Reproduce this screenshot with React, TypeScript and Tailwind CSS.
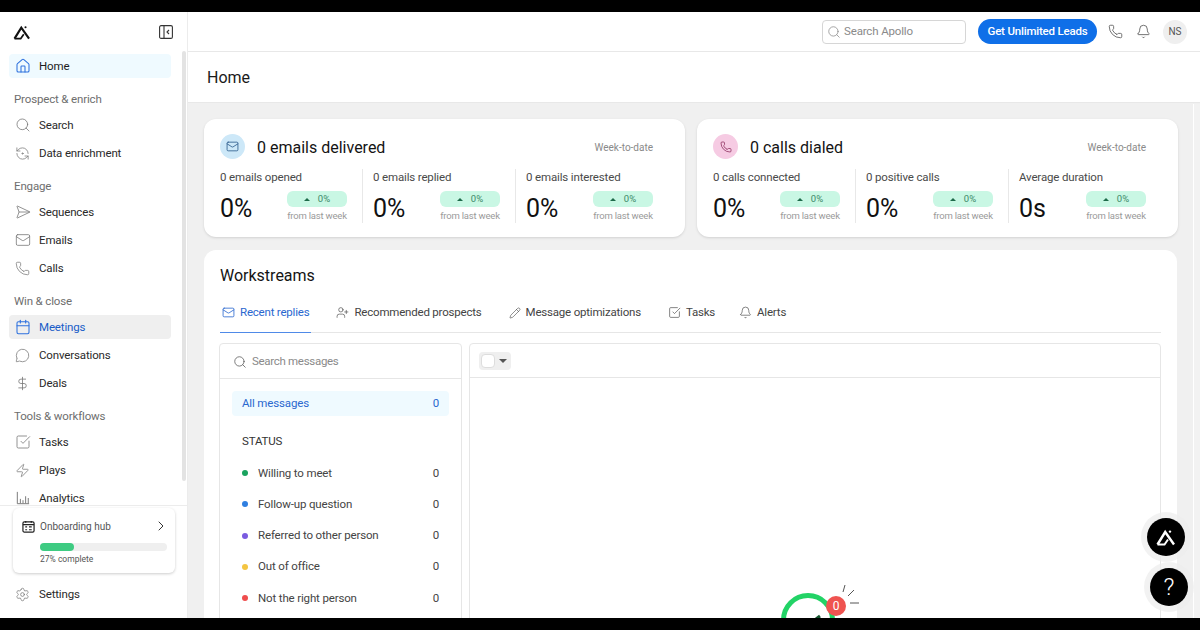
import { House, Search, RefreshCcwDot, SendHorizontal, Mail, Phone, Calendar, MessageCircle, DollarSign, SquareCheckBig, Zap, Settings, ChevronRight, Bell, UserPlus, Pencil } from "lucide-react";
import type { ReactNode } from "react";

const font = "[font-family:'Roboto',sans-serif]";

function Logo({ className }: { className?: string }) {
  return (
    <svg viewBox="0 0 20 17" className={className} fill="none" stroke="currentColor">
      <path d="M1.5 15.5 L9.2 3 L18 15.5" strokeWidth="2.4" />
      <path d="M1.5 15.5 H8.5 L12 10.5" strokeWidth="2" />
      <circle cx="14" cy="2.6" r="1.2" fill="currentColor" stroke="none" />
    </svg>
  );
}

function Bars({ className }: { className?: string }) {
  return (
    <svg viewBox="0 0 16 16" className={className} fill="none" stroke="currentColor" strokeWidth="1.1">
      <path d="M1.5 1v13.5H15M5 14V9M8 14V10.5M11 14V6M14 14V8" />
    </svg>
  );
}

function NavRow({ icon, label, state }: { icon: ReactNode; label: string; state?: "home" | "active" }) {
  return (
    <div className="h-7 flex items-center">
      <div
        className={
          "h-6 w-[162px] ml-[9px] rounded flex items-center pl-[5px] gap-[8px] text-[11.5px] tracking-[-0.15px] " +
          (state === "home"
            ? "bg-[#effaff] text-[#1c1c1c]"
            : state === "active"
            ? "bg-[#efefef] text-[#1a5dc8]"
            : "text-[#2a2a2a]")
        }
      >
        <span className={"w-[17px] flex justify-center " + (state ? "text-[#2f72de]" : "text-[#777]")}>{icon}</span>
        <span className="mt-px">{label}</span>
      </div>
    </div>
  );
}

function SideLabel({ text }: { text: string }) {
  return <div className="h-6 mt-[7px] ml-[14px] pt-px flex items-center text-[11.5px] tracking-[-0.15px] text-[#6e6e6e]">{text}</div>;
}

function Stat({ label, value, last }: { label: string; value: string; last?: boolean }) {
  return (
    <div className={"w-[143px] mr-[10px] h-[54px] " + (last ? "" : "border-r border-[#e8e8e8]")}>
      <div className="text-[11.5px] tracking-[-0.15px] leading-4 text-[#4a4a4a]">{label}</div>
      <div className="flex justify-between w-[127px] mt-[6px]">
        <div className="text-[25px] leading-8 mt-[2px] text-[#111]">{value}</div>
        <div className="w-[60px] flex flex-col items-center">
          <div className="w-[60px] h-4 rounded-md bg-[#c9f7e4] flex items-center justify-center gap-[8px] text-[9.5px] text-[#3d8a68]">
            <span className="w-0 h-0 border-x-[3px] border-x-transparent border-b-[3px] border-b-[#1f6b4a]" />
            0%
          </div>
          <div className="text-[9.5px] tracking-[-0.2px] leading-4 mt-px text-[#9a9a9a] whitespace-nowrap">from last week</div>
        </div>
      </div>
    </div>
  );
}

function StatCard({ icon, tint, title, stats }: { icon: ReactNode; tint: string; title: string; stats: [string, string][] }) {
  return (
    <div className="w-[481px] h-[118px] bg-white rounded-xl shadow-sm pl-[16px] pt-[15px]">
      <div className="flex items-center h-[25px] pr-[32px]">
        <span className={"w-[25px] h-[25px] rounded-full flex items-center justify-center " + tint}>{icon}</span>
        <span className="ml-[12px] mt-[2px] text-base text-[#141414]">{title}</span>
        <span className="ml-auto mt-px text-[10px] text-[#8a8a8a]">Week-to-date</span>
      </div>
      <div className="flex mt-[10px]">
        {stats.map((s, i) => (
          <Stat key={s[0]} label={s[0]} value={s[1]} last={i === 2} />
        ))}
      </div>
    </div>
  );
}

function Tab({ icon, label, active, nudge }: { icon: ReactNode; label: string; active?: boolean; nudge?: boolean }) {
  return (
    <div className={"h-10 flex items-center gap-[5px] px-[2px] text-[11.5px] tracking-[-0.2px] -mb-px border-b " + (nudge ? "-ml-[3px] " : "") + (active ? "border-[#4f8ae8] text-[#2a68cf]" : "border-transparent text-[#444]")}>
      {icon}
      <span className="mt-px">{label}</span>
    </div>
  );
}

function StatusRow({ dot, label }: { dot: string; label: string }) {
  return (
    <div className="h-[31.25px] flex items-center pl-[22px] pr-[22px] text-[11.5px] tracking-[-0.15px] text-[#444]">
      <span className={"w-[6px] h-[6px] rounded-full mr-[10px] " + dot} />
      {label}
      <span className="ml-auto">0</span>
    </div>
  );
}

export default function App() {
  return (
    <div className={"w-[1200px] h-[630px] overflow-hidden relative bg-black flex flex-col " + font}>
      <div className="h-3 shrink-0" />
      <div className="h-[606px] flex bg-white">
        <aside className="w-[188px] shrink-0 border-r border-[#ececec] flex flex-col relative">
          <div className="h-[38px] flex items-center justify-between pl-[13px] pr-[14px] mt-[1px]">
            <Logo className="w-[18px] h-[15px] text-[#111]" />
            <svg viewBox="0 0 14 14" className="w-[14px] h-[14px] text-[#333]" fill="none" stroke="currentColor" strokeWidth="1.1">
              <rect x="0.6" y="0.6" width="12.8" height="12.8" rx="1.5" />
              <path d="M5 1v12M10 5L8 7l2 2" />
            </svg>
          </div>
          <div className="flex-1 overflow-hidden flex">
            <nav className="w-[182px] h-[454px] overflow-hidden pt-[1px]">
              <NavRow state="home" label="Home" icon={<House size={16} strokeWidth={1.6} />} />
              <SideLabel text="Prospect & enrich" />
              <NavRow label="Search" icon={<Search size={16} strokeWidth={1.2} />} />
              <NavRow label="Data enrichment" icon={<RefreshCcwDot size={15} strokeWidth={1.2} />} />
              <SideLabel text="Engage" />
              <NavRow label="Sequences" icon={<SendHorizontal size={16} strokeWidth={1.2} />} />
              <NavRow label="Emails" icon={<Mail size={16} strokeWidth={1.2} />} />
              <NavRow label="Calls" icon={<Phone size={15} strokeWidth={1.2} />} />
              <SideLabel text="Win & close" />
              <NavRow state="active" label="Meetings" icon={<Calendar size={16} strokeWidth={1.6} />} />
              <NavRow label="Conversations" icon={<MessageCircle size={15} strokeWidth={1.2} />} />
              <NavRow label="Deals" icon={<DollarSign size={15} strokeWidth={1.3} />} />
              <SideLabel text="Tools & workflows" />
              <div>
                <NavRow label="Tasks" icon={<SquareCheckBig size={16} strokeWidth={1.2} />} />
                <NavRow label="Plays" icon={<Zap size={15} strokeWidth={1.2} />} />
                <NavRow label="Analytics" icon={<Bars className="w-[14px] h-[14px]" />} />
              </div>
            </nav>
            <div className="w-[4px] h-[430px] bg-[#e3e3e3] rounded-sm" />
          </div>
          <div className="absolute left-0 right-0 top-[493px] border-t border-[#ececec] bg-white h-[113px]">
            <div className="mt-[2px] ml-[13px] w-[162px] h-[65px] rounded-md bg-white shadow-[0_1px_3px_rgba(0,0,0,0.2)] pl-[9px] pr-[6px] pt-[10px]">
              <div className="flex items-center gap-[5px] text-[10px] text-[#555] h-4">
                <svg viewBox="0 0 14 14" className="w-[13px] h-[13px] text-[#222]" fill="none" stroke="currentColor" strokeWidth="1.3">
                  <rect x="1" y="2" width="12" height="11" rx="1.5" />
                  <path d="M1 5h12M4 1v2M10 1v2M3.5 7.5h2M3.5 10.5h2M7.5 7.5h3M7.5 10.5h3" />
                </svg>
                Onboarding hub
                <ChevronRight size={16} className="ml-auto text-[#333]" strokeWidth={1.5} />
              </div>
              <div className="ml-[18px] mr-[2px] mt-[9px] h-2 rounded bg-[#efefef]">
                <div className="w-[34px] h-2 rounded bg-[#3ecb82]" />
              </div>
              <div className="ml-[18px] text-[8.5px] leading-4 text-[#555]">27% complete</div>
            </div>
            <div className="mt-[7px] h-7">
              <NavRow label="Settings" icon={<Settings size={15} strokeWidth={1.2} />} />
            </div>
          </div>
        </aside>
        <main className="flex-1 min-w-0 flex flex-col bg-[#f0f0f0]">
          <header className="h-[40px] shrink-0 bg-white border-b border-[#e8e8e8] flex items-center justify-end pr-[13px]">
            <div className="w-[144px] h-[24px] border border-[#d6d6d6] rounded flex items-center gap-[3px] pl-[4px] text-[11.5px] tracking-[-0.15px] text-[#8a8a8a]">
              <Search size={14} strokeWidth={1.3} />
              Search Apollo
            </div>
            <div className="ml-[12px] w-[119px] h-[25px] rounded-full bg-[#0f6fe8] text-white text-[11.5px] tracking-[-0.2px] font-medium flex items-center justify-center">
              Get Unlimited Leads
            </div>
            <Phone size={15} strokeWidth={1.2} className="ml-[11px] text-[#444]" />
            <Bell size={15} strokeWidth={1.2} className="ml-[13px] text-[#444]" />
            <div className="ml-[12px] w-[24px] h-[24px] rounded-full bg-[#efefef] flex items-center justify-center text-[10px] text-[#555]">NS</div>
          </header>
          <div className="h-[51px] shrink-0 bg-white border-b border-[#e8e8e8] flex items-center pl-[19px] pt-[2px] text-base text-[#1a1a1a]">Home</div>
          <div className="flex-1 overflow-hidden flex flex-col gap-[13px] pl-[16px] pt-[16px]">
            <div className="flex gap-[12px]">
              <StatCard
                tint="bg-[#cde8f8]"
                icon={<Mail size={13} className="text-[#2a5a8a]" strokeWidth={1.5} />}
                title="0 emails delivered"
                stats={[["0 emails opened", "0%"], ["0 emails replied", "0%"], ["0 emails interested", "0%"]]}
              />
              <StatCard
                tint="bg-[#f6cbe3]"
                icon={<Phone size={12} className="text-[#8a2a5a]" strokeWidth={1.5} />}
                title="0 calls dialed"
                stats={[["0 calls connected", "0%"], ["0 positive calls", "0%"], ["Average duration", "0s"]]}
              />
            </div>
            <div className="w-[973px] h-[400px] bg-white rounded-t-xl pl-[16px] pr-[16px] pt-[14px]">
              <div className="text-base text-[#141414] leading-6">Workstreams</div>
              <div className="mt-[5px] h-[40px] flex gap-[23px] border-b border-[#e6e6e6]">
                <Tab active label="Recent replies" icon={<Mail size={13} strokeWidth={1.5} />} />
                <Tab label="Recommended prospects" icon={<UserPlus size={13} strokeWidth={1.2} />} />
                <Tab label="Message optimizations" icon={<Pencil size={12} strokeWidth={1.2} />} />
                <Tab label="Tasks" icon={<SquareCheckBig size={13} strokeWidth={1.2} />} />
                <Tab nudge label="Alerts" icon={<Bell size={13} strokeWidth={1.2} />} />
              </div>
              <div className="mt-[10px] flex gap-[7px] h-[300px]">
                <div className="w-[243px] -ml-px border border-[#e6e6e6] rounded-t">
                  <div className="h-[35px] border-b border-[#e6e6e6] flex items-center gap-[5px] pl-[13px] pt-px text-[11.5px] tracking-[-0.3px] text-[#8a8a8a]">
                    <Search size={14} strokeWidth={1.3} className="text-[#555]" />
                    Search messages
                  </div>
                  <div className="mt-[12px] mx-[12px] h-[25px] rounded bg-[#effaff] flex items-center justify-between px-[10px] pt-px text-[11.5px] tracking-[-0.15px] text-[#2a68cf]">
                    <span>All messages</span>
                    <span>0</span>
                  </div>
                  <div className="mt-[13px] pl-[22px] text-[11.5px] tracking-[-0.15px] text-[#333] leading-[25px]">STATUS</div>
                  <div className="mt-[3.5px]">
                    <StatusRow dot="bg-[#1aa35f]" label="Willing to meet" />
                    <StatusRow dot="bg-[#2f7fe0]" label="Follow-up question" />
                    <StatusRow dot="bg-[#7a5be0]" label="Referred to other person" />
                    <StatusRow dot="bg-[#f4c542]" label="Out of office" />
                    <StatusRow dot="bg-[#ef4d4d]" label="Not the right person" />
                  </div>
                </div>
                <div className="flex-1 border border-[#e6e6e6] rounded-t">
                  <div className="h-[34px] border-b border-[#e6e6e6] flex items-center pl-[9px]">
                    <div className="w-[32px] h-[18px] rounded-sm bg-[#efefef] flex items-center pl-[2px] gap-[4px]">
                      <span className="w-[14px] h-[14px] bg-white border border-[#ddd] rounded-sm" />
                      <span className="w-0 h-0 border-x-[4px] border-x-transparent border-t-[4px] border-t-[#555]" />
                    </div>
                  </div>
                </div>
              </div>
            </div>
          </div>
        </main>
      </div>
      <div className="h-3 shrink-0 z-10 bg-black" />
      <div className="absolute left-[1193px] top-[104px] w-[7px] h-[514px] bg-[#f2f2f2] border-l border-white" />
      <div className="absolute left-[1141px] top-[512px] w-[50px] h-[50px] rounded-full bg-[#ececec]/70 flex items-center justify-center">
        <div className="w-[38px] h-[38px] rounded-full bg-black flex items-center justify-center text-white">
          <Logo className="w-[20px] h-[17px]" />
        </div>
      </div>
      <div className="absolute left-[1144px] top-[562px] w-[50px] h-[50px] rounded-full bg-[#ececec]/70 flex items-center justify-center">
        <div className="w-[38px] h-[38px] rounded-full bg-black flex items-center justify-center text-white text-[24px] font-light">?</div>
      </div>
      <svg viewBox="0 0 80 40" className="absolute left-[780px] top-[584px] w-[80px] h-[40px]" fill="none">
        <circle cx="28" cy="36" r="24.5" stroke="#22d366" strokeWidth="5" />
        <path d="M36 35l4-3" stroke="#14532d" strokeWidth="3" />
        <circle cx="56" cy="22" r="10" fill="#ef5350" />
        <text x="56" y="26" textAnchor="middle" fontSize="12" fill="#fff">0</text>
        <path d="M63 8l2-7M68 12l6-6M70 19h9" stroke="#555" strokeWidth="1" />
      </svg>
    </div>
  );
}
